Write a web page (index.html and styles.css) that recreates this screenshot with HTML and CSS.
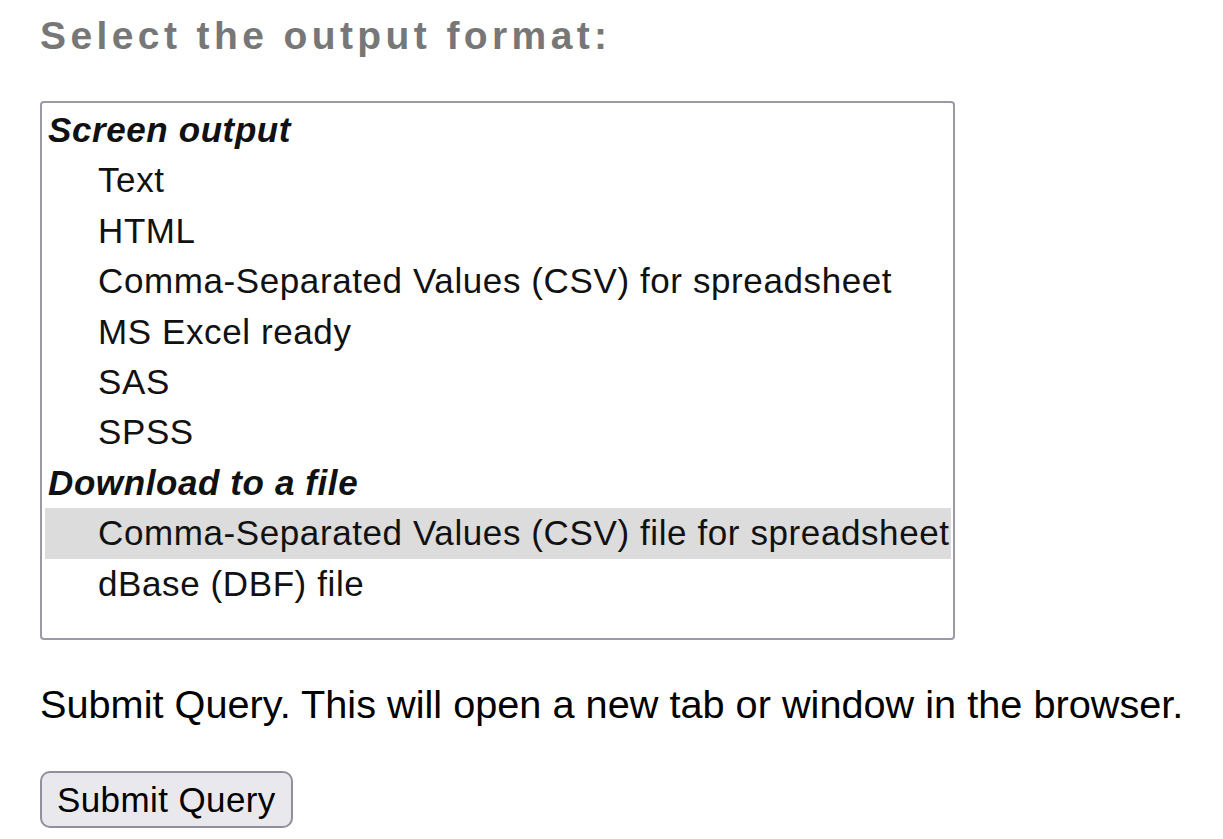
FILE: index.html
```html
<!DOCTYPE html>
<html>
<head>
    <link rel="stylesheet" href="styles.css">
</head>
<body>
    <form class="query-form">
        <h3 class="form-title">Select the output format:</h3>

        <div class="listbox" role="listbox">
            <div class="opt-group">Screen output</div>
            <div class="opt">Text</div>
            <div class="opt">HTML</div>
            <div class="opt">Comma-Separated Values (CSV) for spreadsheet</div>
            <div class="opt">MS Excel ready</div>
            <div class="opt">SAS</div>
            <div class="opt">SPSS</div>
            <div class="opt-group">Download to a file</div>
            <div class="opt selected">Comma-Separated Values (CSV) file for spreadsheet</div>
            <div class="opt">dBase (DBF) file</div>
        </div>

        <p class="submit-note">Submit Query. This will open a new tab or window in the browser.</p>

        <button type="button" class="submit-button">Submit Query</button>
    </form>
</body>
</html>
```

FILE: styles.css
```css
body {
    margin: 0;
    padding: 12px 0 0 40px;
    font-family: "Liberation Sans", Arial, sans-serif;
    background-color: #fff;
    color: #111;
}
.form-title {
    margin: 0;
    font-size: 39px;
    line-height: 48px;
    font-weight: bold;
    letter-spacing: 4.4px;
    color: #777;
}
.listbox {
    width: 911px;
    height: 533px;
    margin-top: 41px;
    padding-top: 2px;
    border: 2px solid #9a9aa6;
    border-radius: 4px;
    box-sizing: content-box;
    overflow: hidden;
}
.opt-group,
.opt {
    height: 50.4px;
    line-height: 50.4px;
    font-size: 35px;
    letter-spacing: 0.6px;
    white-space: nowrap;
}
.opt-group {
    padding-left: 6px;
    font-weight: bold;
    font-style: italic;
}
.opt {
    padding-left: 56px;
}
.opt.selected {
    background-color: #dcdcdc;
    margin: 0 2px 0 3px;
    padding-left: 53px;
}
.submit-note {
    margin: 41px 0 0;
    font-size: 39.7px;
    line-height: 46px;
    color: #000;
}
.submit-button {
    margin-top: 44px;
    padding: 0 15px;
    height: 57px;
    font-family: "Liberation Sans", Arial, sans-serif;
    font-size: 35px;
    letter-spacing: 0.4px;
    color: #000;
    background-color: #e9e9ed;
    border: 2px solid #8f8f9d;
    border-radius: 10px;
}
```
